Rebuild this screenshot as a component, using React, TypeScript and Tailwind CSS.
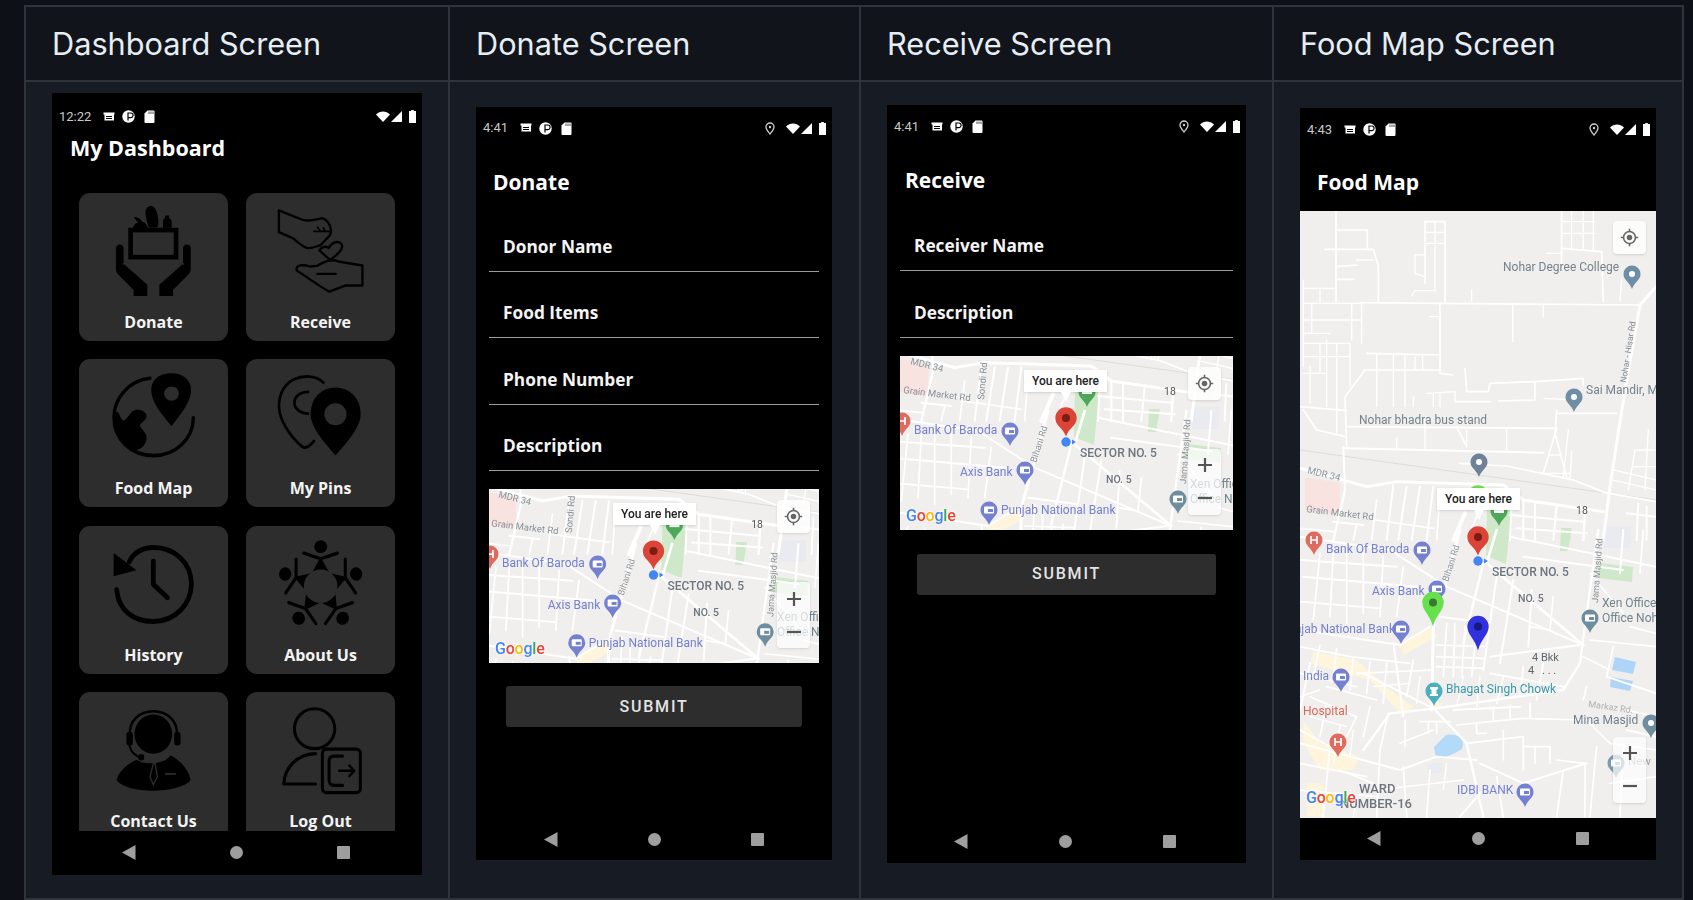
import type { ReactNode } from "react";

const openSans = "[font-family:'Open_Sans',sans-serif]";
const roboto = "[font-family:Roboto,sans-serif]";

/* map roads, written in crop coords and scaled down to world coords */
const northRoads: [number, string][] = [
  [5, "210,308 1050,315"],
  [9, "1098,260 1050,315 1005,570 960,860 940,1020"],
  [5, "138,33 138,305"],
  [5, "138,90 232,90 232,145"],
  [5, "105,148 250,148 265,198 265,305"],
  [5, "200,195 138,200"],
  [5, "200,180 250,180"],
  [5, "138,238 190,238"],
  [5, "405,65 465,65 465,305"],
  [5, "405,65 405,250"],
  [4, "405,97 465,97"],
  [4, "405,130 465,130"],
  [4, "435,65 435,275"],
  [4, "375,165 405,165"],
  [4, "375,165 375,220 405,230"],
  [4, "365,288 375,272 435,272"],
  [5, "815,33 815,190"],
  [4, "845,33 845,150"],
  [4, "880,33 880,150"],
  [4, "910,33 910,150"],
  [4, "815,65 915,65"],
  [4, "815,100 915,100"],
  [5, "815,145 935,155 940,305"],
  [4, "770,160 815,160"],
  [4, "990,305 995,240"],
  [4, "545,270 545,305"],
  [4, "668,315 668,425"],
  [4, "760,315 760,350"],
  [5, "450,310 450,520 488,525"],
  [4, "420,350 450,350"],
  [5, "230,460 450,465"],
  [5, "225,510 450,510"],
  [4, "260,460 260,620"],
  [4, "310,465 310,620"],
  [4, "345,465 345,620"],
  [4, "375,470 375,510"],
  [4, "398,470 398,510"],
  [5, "225,510 165,590 170,740"],
  [4, "40,240 40,500"],
  [4, "40,310 215,310"],
  [4, "65,310 65,400"],
  [4, "90,265 90,310"],
  [4, "40,265 135,265"],
  [4, "40,360 215,360"],
  [4, "40,430 180,430"],
  [4, "40,470 180,470"],
  [4, "110,420 110,620"],
  [4, "140,430 140,700"],
  [4, "185,310 185,420"],
  [4, "215,310 215,430"],
  [4, "180,430 180,560"],
  [4, "60,500 60,610"],
  [4, "90,430 90,520"],
  [4, "40,400 120,400"],
  [4, "40,520 110,520"],
  [5, "30,620 170,632"],
  [5, "40,630 80,690 165,710"],
  [5, "170,680 800,685"],
  [6, "165,745 760,758"],
  [4, "405,650 405,750"],
  [4, "320,715 320,745"],
  [4, "650,688 650,755"],
  [5, "525,505 530,575 595,575 600,550 735,545 735,600 625,603"],
  [5, "735,545 880,535 880,555"],
  [5, "495,605 600,605"],
  [4, "410,580 495,575 495,605"],
  [4, "370,590 370,620"],
  [4, "430,580 430,620"],
  [4, "450,580 450,620"],
  [5, "500,680 530,740"],
  [4, "530,690 530,735"],
  [5, "800,685 760,820"],
  [5, "800,640 980,640"],
  [4, "762,595 850,600"],
  [5, "800,630 795,700 830,830"],
  [4, "835,690 820,835"],
  [4, "845,755 840,840"],
  [4, "755,820 840,820"],
  [4, "775,765 815,765"],
  [5, "510,790 650,798 850,840 945,878 1098,905"],
  [9, "30,805 230,860 320,845 640,855 700,900 940,935"],
  [4, "1040,750 1095,750"],
  [4, "1030,800 1098,800"],
  [4, "970,810 1098,840"],
  [4, "965,840 1098,870"],
  [4, "1035,750 1015,870"],
  [4, "1075,690 1065,870"],
  [6, "310,855 290,1020"],
  [6, "350,860 325,1020"],
  [6, "390,860 365,1020"],
  [6, "430,860 410,1020"],
  [7, "165,870 130,1020"],
  [6, "160,740 165,870"],
  [5, "255,960 430,985"],
  [12, "525,940 490,1020"],
  [6, "665,905 660,1020"],
  [6, "700,900 700,1020"],
  [6, "735,905 735,1020"],
  [6, "800,920 790,1020"],
  [7, "885,940 880,1020"],
  [6, "660,945 880,965"],
  [6, "680,985 890,1000"],
  [6, "130,965 220,975"],
  [6, "1010,940 1098,950"],
  [6, "1045,910 1040,1020"],
  [6, "1070,920 1070,1020"],
  [5, "200,975 190,1020"],
  [5, "260,900 245,1020"],
  [5, "30,985 130,995"],
  [5, "450,880 440,1020"],
  [5, "560,950 530,1020"],
];

const southRoads: [number, string][] = [
  [9, "510,0 430,290 425,540"],
  [7, "580,100 520,340"],
  [6, "30,20 300,60 470,170 880,345"],
  [8, "620,0 590,100 880,345"],
  [7, "925,0 890,250 870,400 820,480 440,535 300,550 220,660"],
  [6, "30,90 320,110"],
  [6, "40,140 380,170"],
  [5, "90,70 70,270"],
  [5, "130,70 120,260"],
  [5, "170,60 170,280"],
  [5, "220,70 220,250"],
  [5, "280,80 270,260"],
  [5, "340,110 320,260"],
  [5, "30,215 270,235"],
  [6, "620,140 580,420"],
  [6, "670,150 630,400"],
  [6, "725,180 715,350"],
  [5, "790,200 780,300 720,290"],
  [6, "660,20 1098,110"],
  [6, "700,80 1000,120"],
  [6, "1000,0 990,130"],
  [5, "1060,0 1050,130"],
  [6, "600,380 870,345"],
  [6, "450,260 600,280"],
  [5, "470,280 460,440"],
  [5, "495,280 490,440"],
  [5, "525,290 515,440"],
  [5, "555,340 545,440"],
  [5, "440,345 590,350"],
  [5, "440,380 580,385"],
  [5, "440,410 580,415"],
  [6, "30,300 330,345"],
  [6, "330,345 420,290"],
  [6, "310,340 340,560"],
  [5, "180,380 360,400"],
  [5, "200,430 430,420"],
  [5, "370,390 350,500"],
  [6, "60,400 30,540"],
  [5, "110,470 260,510"],
  [6, "220,430 430,535"],
  [7, "430,535 530,640 580,860"],
  [6, "30,640 330,720 440,680 560,690"],
  [5, "295,550 270,660 260,860"],
  [5, "345,570 345,650"],
  [5, "390,575 480,575"],
  [5, "415,575 415,610"],
  [5, "440,575 440,610"],
  [6, "490,540 690,530"],
  [5, "500,585 700,565 880,570"],
  [5, "560,580 560,610 590,610"],
  [5, "610,530 610,570"],
  [5, "660,525 660,570"],
  [5, "720,520 720,565"],
  [6, "570,700 700,760 890,700"],
  [5, "700,650 780,650 780,700"],
  [5, "700,620 700,720"],
  [5, "735,650 735,700"],
  [5, "800,690 885,700 885,860"],
  [5, "820,720 800,860"],
  [6, "1010,600 1098,620"],
  [5, "1020,290 1098,310"],
  [5, "900,330 1098,350"],
  [6, "950,440 1098,490"],
  [5, "890,470 880,510"],
  [6, "510,860 570,790"],
  [5, "620,740 640,860"],
  [5, "120,650 100,860"],
  [5, "30,600 120,650"],
  [5, "150,720 250,760"],
  [5, "30,350 180,380"],
  [5, "90,345 70,440"],
  [5, "140,355 130,440"],
  [5, "190,380 180,480"],
  [5, "240,395 230,490"],
  [5, "290,400 280,520"],
  [5, "30,430 200,470"],
  [5, "60,500 200,560"],
  [5, "200,560 160,640"],
  [5, "110,520 90,620"],
  [5, "240,530 220,620"],
  [5, "30,700 230,740"],
  [5, "330,640 430,600"],
  [5, "340,710 350,860"],
  [5, "420,720 410,860"],
  [5, "260,780 520,750"],
  [5, "600,430 820,470"],
  [5, "640,440 620,520"],
  [5, "760,400 740,510"],
  [5, "700,410 690,500"],
  [5, "20,780 260,800"],
  [5, "640,600 640,690"],
  [5, "530,640 700,620"],
  [5, "890,570 960,640 1098,660"],
  [5, "920,650 900,860"],
  [5, "960,760 1098,740"],
  [5, "1000,650 990,860"],
  [5, "880,380 960,420"],
  [5, "970,350 950,440"],
  [5, "1098,560 1010,540"],
  [5, "900,130 1000,250"],
  [4, "60,560 170,590"],
  [4, "150,590 130,700"],
  [4, "190,600 180,680"],
  [4, "360,460 250,470"],
  [4, "390,440 380,520"],
  [4, "520,440 500,530"],
  [4, "570,440 560,530"],
  [4, "30,500 90,480"],
  [4, "200,800 190,860"],
  [4, "470,700 460,780"],
];

function Teardrop({ x, y, r, tip, color, dot, inner }: { x: number; y: number; r: number; tip: number; color: string; dot?: string; inner?: number }) {
  // x,y = head centre, tip = height from centre to the point
  const d = `M${x - r} ${y}a${r} ${r} 0 1 1 ${2 * r} 0c0 ${r * 0.75} ${-r * 0.7} ${tip * 0.5} ${-r} ${tip}c${-r * 0.3} ${-tip * 0.5} ${-r} ${-tip + r * 0.75} ${-r} ${-tip}z`;
  return (
    <g>
      <path d={d} fill={color} />
      {dot && <circle cx={x} cy={y} r={inner ?? r * 0.38} fill={dot} />}
    </g>
  );
}

function Poi({ x, y, color, icon = "bank" }: { x: number; y: number; color: string; icon?: "bank" | "dot" }) {
  return (
    <g>
      <Teardrop x={x} y={y} r={8.5} tip={15} color={color} />
      {icon === "bank" ? (
        <g>
          <rect x={x - 5} y={y - 3.5} width={10} height={7} rx={1} fill="#fff" />
          <rect x={x - 1} y={y - 1} width={5} height={3} fill={color} />
        </g>
      ) : (
        <circle cx={x} cy={y} r={3} fill="#fff" />
      )}
    </g>
  );
}

function HospitalPin({ x, y }: { x: number; y: number }) {
  return (
    <g>
      <Teardrop x={x} y={y} r={8.5} tip={15} color="#df6b5f" />
      <path d={`M${x - 3} ${y - 4}v8M${x + 3} ${y - 4}v8M${x - 3} ${y}h6`} stroke="#fff" strokeWidth={1.7} />
    </g>
  );
}

function MapText({ x, y, size = 12, color = "#73838f", weight = 400, rotate, anchor, children }: { x: number; y: number; size?: number; color?: string; weight?: number; rotate?: number; anchor?: "end" | "middle"; children: ReactNode }) {
  return (
    <text x={x} y={y} fontSize={size} fill={color} fontWeight={weight} textAnchor={anchor} transform={rotate ? `rotate(${rotate} ${x} ${y})` : undefined} className={roboto}>
      {children}
    </text>
  );
}

function MapWorld({ small }: { small?: boolean }) {
  const bank = "#7480d0";
  return (
    <>
      <rect x={-10} y={-20} width={400} height={660} fill="#f0efed" />
      <path d="M5 266L40 272V304L5 299Z" fill="#f8e3e0" />
      <path d="M187 295H212L206 353L186 345Z" fill="#cfe8c9" />
      <path d="M261 317H272L268 340H260Z" fill="#cfe8c9" />
      <path d="M300 352L333 356L332 371L298 367Z" fill="#cfe8c9" />
      <path d="M304 315H331V337H304Z" fill="#e9ebf0" />
      <path d="M315 446L336 451L333 463L312 459ZM311 466L333 470L330 480L310 476Z" fill="#aed5f8" />
      <path d="M134 536L146 524C158 522 166 528 162 538C152 544 144 548 136 546Z" fill="#b3daf9" />
      <path d="M128 552H142V562H128Z" fill="#e9ebf0" />

      <g transform="translate(-10,319) scale(0.3333)" fill="none" strokeLinecap="round" strokeLinejoin="round">
        <path d="M70 365L200 390L300 480L370 530L340 560L240 450L60 400Z" fill="#fef5dc" />
        <path d="M330 345L420 290L440 320L340 375Z" fill="#fef5dc" />
        <path d="M40 570L90 640L210 680L190 720H90L40 640Z" fill="#fef5dc" />
        <path d="M50 760H100V860H50Z" fill="#fef5dc" />
        <path d="M410 510L460 520L440 540Z" fill="#fef5dc" />
        {southRoads.map(([w, pts], i) => (
          <polyline key={i} points={pts} stroke="#fff" strokeWidth={w} />
        ))}
      </g>

      <g transform="translate(-10,-11) scale(0.3333)" fill="none" strokeLinecap="round" strokeLinejoin="round">
        <path d="M30 750L1098 900" stroke="#dcdcdc" strokeWidth={3} />
        {northRoads.map(([w, pts], i) => (
          <polyline key={i} points={pts} stroke="#fff" strokeWidth={w} />
        ))}
      </g>

      <MapText x={203} y={60} size={12}>Nohar Degree College</MapText>
      <Poi x={332} y={63} color="#6e8ea5" icon="dot" />
      <MapText x={286} y={183} size={12}>Sai Mandir, M</MapText>
      <Poi x={274} y={186} color="#6e8ea5" icon="dot" />
      <MapText x={59} y={213} size={12}>Nohar bhadra bus stand</MapText>
      <MapText x={326} y={172} size={8.5} rotate={-81} color="#7d8a94">Nohar - Hisar Rd</MapText>
      {small ? (
        <MapText x={22} y={272} size={9.5} rotate={14} color="#8a96a0">MDR 34</MapText>
      ) : (
        <MapText x={7} y={262} size={9.5} rotate={14} color="#8a96a0">MDR 34</MapText>
      )}
      <MapText x={small ? 15 : 6} y={301} size={9.5} rotate={7} color="#8a9299">Grain Market Rd</MapText>
      <MapText x={276} y={303} size={10.5} color="#555">18</MapText>
      {small && <MapText x={96} y={308} size={9.5} rotate={-85} color="#8a9299">Sondi Rd</MapText>}

      <Teardrop x={199} y={300} r={8.5} tip={15} color="#4fa75a" />
      <path d={`M194 298h10v4h-10z`} fill="#fff" />

      <HospitalPin x={14} y={329} />
      <MapText x={26} y={342} size={12} color={bank}>Bank Of Baroda</MapText>
      <Poi x={122} y={339} color={bank} />
      <MapText x={72} y={384} size={12} color={bank}>Axis Bank</MapText>
      <Poi x={137} y={378} color={bank} />
      <MapText x={148} y={371} size={9} rotate={-72} color="#8a9299">Bihani Rd</MapText>
      <MapText x={192} y={365} size={12} weight={500} color="#6d7580">SECTOR NO. 5</MapText>
      <MapText x={218} y={391} size={10.5} weight={500} color="#6d7580">NO. 5</MapText>
      <MapText x={298} y={392} size={9} rotate={-86} color="#8a9299">Jama Masjid Rd</MapText>
      <MapText x={302} y={396} size={12} color="#71848f">Xen Office</MapText>
      <MapText x={302} y={411} size={12} color="#71848f">Office Noh</MapText>
      <Poi x={290} y={407} color="#6e8ea0" />
      {small ? (
        <MapText x={113} y={422} size={12} color={bank}>Punjab National Bank</MapText>
      ) : (
        <MapText x={95} y={422} size={12} color={bank} anchor="end">Punjab National Bank</MapText>
      )}
      <Poi x={101} y={418} color={bank} />

      <MapText x={3} y={469} size={12} color={bank}>India</MapText>
      <Poi x={41} y={466} color={bank} />
      <MapText x={3} y={504} size={12} color="#d9675c">Hospital</MapText>
      <HospitalPin x={38} y={531} />
      <MapText x={146} y={482} size={12} color="#3a9aa8">Bhagat Singh Chowk</MapText>
      <Teardrop x={134} y={480} r={8.5} tip={15} color="#4aafc0" />
      <path d="M130 476h8v2l-1.5 1v4h1.5v2h-8v-2h1.5v-4l-1.5-1z" fill="#fff" />
      <MapText x={232} y={450} size={11} color="#5f6870">4 Bkk</MapText>
      <MapText x={228} y={463} size={11} color="#5f6870">4</MapText>
      <MapText x={242} y={463} size={11} color="#5f6870">.  .  .</MapText>
      <MapText x={288} y={496} size={9} rotate={8} color="#b0b0b0">Markaz Rd.</MapText>
      <MapText x={273} y={513} size={12} color="#71808f">Mina Masjid</MapText>
      <Poi x={351} y={512} color="#6e8ea0" icon="dot" />
      <Poi x={316} y={552} color="#7d9aab" />
      <MapText x={328} y={554} size={11.5} color="#9aa2aa">New</MapText>
      <MapText x={59} y={582} size={13} weight={500} color="#6d7580">WARD</MapText>
      <MapText x={112} y={597} size={13} weight={500} color="#6d7580" anchor="end">NUMBER-16</MapText>
      <MapText x={157} y={583} size={12} color={bank}>IDBI BANK</MapText>
      <Poi x={225} y={581} color={bank} />
    </>
  );
}

function GoogleMark({ className }: { className: string }) {
  return (
    <span className={`absolute text-[16px] font-medium leading-none tracking-[-0.2px] [text-shadow:0_0_2px_#fff,0_0_2px_#fff] ${roboto} ${className}`}>
      <span className="text-[#4285f4]">G</span>
      <span className="text-[#ea4335]">o</span>
      <span className="text-[#fbbc05]">o</span>
      <span className="text-[#4285f4]">g</span>
      <span className="text-[#34a853]">l</span>
      <span className="text-[#ea4335]">e</span>
    </span>
  );
}

function HereBubble({ className }: { className: string }) {
  return (
    <div className={`absolute flex h-[22px] w-[83px] items-center justify-center bg-white text-[12px] font-medium text-[#222] shadow-sm ${roboto} ${className}`}>
      You are here
      <div className="absolute top-full left-1/2 -ml-[5px] h-0 w-0 border-x-[5px] border-t-[10px] border-x-transparent border-t-white" />
    </div>
  );
}

function LocateButton({ className }: { className: string }) {
  return (
    <div className={`absolute flex h-[33px] w-[33px] items-center justify-center rounded-sm bg-white/80 shadow-sm ${className}`}>
      <svg width="19" height="19" viewBox="0 0 24 24" fill="none" stroke="#666" strokeWidth="2">
        <circle cx="12" cy="12" r="7.5" />
        <circle cx="12" cy="12" r="3.5" fill="#666" stroke="none" />
        <path d="M12 1v3M12 20v3M1 12h3M20 12h3" />
      </svg>
    </div>
  );
}

function ZoomButtons({ className }: { className: string }) {
  return (
    <div className={`absolute flex h-[66px] w-[33px] flex-col items-center justify-around rounded-sm bg-white/70 shadow-sm ${className}`}>
      <svg width="16" height="16" viewBox="0 0 16 16" stroke="#555" strokeWidth="2.2"><path d="M8 1v14M1 8h14" /></svg>
      <svg width="16" height="16" viewBox="0 0 16 16" stroke="#555" strokeWidth="2.2"><path d="M1 8h14" /></svg>
    </div>
  );
}

function SmallMap({ className }: { className: string }) {
  return (
    <div className={`relative h-[174px] w-full overflow-hidden bg-[#f0efed] ${className}`}>
      <svg viewBox="13 264 331 174" className="block h-full w-full blur-[0.3px]">
        <MapWorld small />
        <Teardrop x={178} y={326} r={10.7} tip={18.5} color="#db4437" dot="#7a1d15" inner={4} />
        <circle cx={178} cy={350} r={4.7} fill="#4285f4" />
        <path d="M184 347.5l4 2.5l-4 2.5z" fill="#4285f4" />
      </svg>
      <HereBubble className="top-[14px] left-[124px]" />
      <LocateButton className="top-[11px] left-[288px]" />
      <ZoomButtons className="top-[93px] left-[288px]" />
      <GoogleMark className="bottom-[6px] left-[6px]" />
    </div>
  );
}

function BigMap() {
  return (
    <div className="relative h-[607px] w-full overflow-hidden bg-[#f0efed]">
      <svg viewBox="0 0 356 607" className="block h-full w-full blur-[0.3px]">
        <MapWorld />
        <Poi x={179} y={251} color="#6e8197" icon="dot" />
        <Teardrop x={178} y={285} r={10.7} tip={18.5} color="#66e04c" dot="#3a7a30" inner={4} />
        <Teardrop x={178} y={326} r={10.7} tip={18.5} color="#db4437" dot="#7a1d15" inner={4} />
        <circle cx={178} cy={350} r={4.7} fill="#4285f4" />
        <path d="M184 347.5l4 2.5l-4 2.5z" fill="#4285f4" />
        <Teardrop x={133} y={391.5} r={10.7} tip={24} color="#66e04c" dot="#3a7a30" inner={4} />
        <Teardrop x={178} y={415.5} r={10.7} tip={24} color="#3131e0" dot="#161a7a" inner={4} />
      </svg>
      <HereBubble className="top-[277px] left-[137px]" />
      <LocateButton className="top-[10px] left-[313px]" />
      <ZoomButtons className="top-[526px] left-[313px]" />
      <GoogleMark className="bottom-[12px] left-[6px]" />
    </div>
  );
}

function NotifIcons() {
  return (
    <div className="ml-[12px] flex items-center gap-[8px]">
      <svg width="12" height="12" viewBox="0 0 12 12" fill="#fff">
        <path d="M0.5 1.5H11.5V3.5H11V9.5H1.5V3.5H0.5ZM3 5V6H9V5ZM3 7V8H9V7Z" fillRule="evenodd" />
      </svg>
      <svg width="13" height="13" viewBox="0 0 13 13" className="-ml-[1px]">
        <circle cx="6.5" cy="6.5" r="6.2" fill="#fff" />
        <path d="M6 2.5V10.5M6 3H8.8a2.2 2.2 0 0 1 0 4.6H6" stroke="#000" strokeWidth="1.2" fill="none" />
      </svg>
      <svg width="11" height="13" viewBox="0 0 11 13" fill="#fff" className="ml-[1px]">
        <path d="M3.5 0.5H9.5a1 1 0 0 1 1 1V12a1 1 0 0 1-1 1H1.5a1 1 0 0 1-1-1V3.5Z" />
        <path d="M5 1.5v2.5M7 1.5v2.5M9 1.5v2.5" stroke="#000" strokeWidth="0.7" />
      </svg>
    </div>
  );
}

function StatusBar({ time, pin, className }: { time: string; pin?: boolean; className: string }) {
  return (
    <div className={`flex shrink-0 items-center pr-[6px] pl-[7px] ${className}`}>
      <span className={`text-[13px] text-[#c9c9c9] ${roboto}`}>{time}</span>
      <NotifIcons />
      <div className="ml-auto flex items-center">
        {pin && (
          <svg width="10" height="13" viewBox="0 0 10 13" fill="none" stroke="#ccc" strokeWidth="1.3" className="mr-[11px]">
            <path d="M5 12C3 9.5 1 7.5 1 5a4 4 0 0 1 8 0C9 7.5 7 9.5 5 12Z" />
            <circle cx="5" cy="5" r="1.2" fill="#ccc" stroke="none" />
          </svg>
        )}
        <svg width="14" height="11" viewBox="0 0 14 11" fill="#fff"><path d="M0 3.4C3.8-.6 10.2-.6 14 3.4L7 11Z" /></svg>
        <svg width="12" height="11" viewBox="0 0 12 11" fill="#fff" className="mr-[6px] ml-[1px]"><path d="M11 0V11H0Z" /></svg>
        <svg width="7" height="13" viewBox="0 0 7 13" fill="#fff"><path d="M2.2 0H4.8V1H7V13H0V1H2.2Z" /></svg>
      </div>
    </div>
  );
}

function NavBar({ xs, className }: { xs: string; className: string }) {
  return (
    <div className={`mt-auto flex shrink-0 items-center ${xs} ${className}`}>
      <svg width="14" height="15" viewBox="0 0 14 15" fill="#9e9e9e"><path d="M13.5 0V15L0 7.5Z" /></svg>
      <div className="h-[13px] w-[13px] rounded-full bg-[#9e9e9e]" />
      <div className="h-[13px] w-[13px] rounded-[1px] bg-[#9e9e9e]" />
    </div>
  );
}

function Field({ label }: { label: string }) {
  return (
    <div className={`flex h-[66.6px] shrink-0 items-end border-b-[1.5px] border-[#9a9a9a] pb-[12px] pl-[14px] text-[17.3px] leading-[24px] font-bold text-[#f4f4f4] ${openSans}`}>
      {label}
    </div>
  );
}

function SubmitButton() {
  return (
    <div className={`mx-[17px] flex h-[41px] items-center justify-center rounded-[3px] bg-[#2d2d2d] text-[16px] font-medium tracking-[1.8px] text-[#e4e4e4] ${roboto}`}>
      SUBMIT
    </div>
  );
}

/* dashboard tile artwork */
const rowBox = "0 0 443 415";

function DonateIcon() {
  const hand = "M109 165c0-14 23-14 23 0v40c0 4 2 8 5 11l66 59v33h-41v-18l-46-46c-5-5-7-10-7-16z";
  const gap = "M130 214c5-6 10-4 16 2l34 32";
  return (
    <svg viewBox="0 0 443 443" className="h-full w-full" fill="#000">
      <path d="M163 72Q180 70 190 90Q172 92 163 72Z" />
      <path d="M198 66c-3-14 3-25 14-27 13-2 20 16 23 34 2 12 2 24-2 30h-26c-4-12-7-24-9-37z" />
      <path d="M250 104V84c0-6 4-8 6-10v-7h12v7c2 2 8 6 8 12v18z" />
      <path d="M160 106c2-14 14-20 24-20s18 8 21 20z" />
      <rect x="153" y="111" width="136" height="81" fill="none" stroke="#000" strokeWidth="14" />
      <path d={hand} />
      <path d={gap} fill="none" stroke="#2d2d2d" strokeWidth="5" />
      <g transform="translate(442,0) scale(-1,1)">
        <path d={hand} />
        <path d={gap} fill="none" stroke="#2d2d2d" strokeWidth="5" />
      </g>
    </svg>
  );
}

function ReceiveIcon() {
  return (
    <svg viewBox="0 0 443 443" className="h-full w-full" fill="none" stroke="#000" strokeWidth="7" strokeLinejoin="round" strokeLinecap="round">
      <path d="M97 52V117L140 136C152 146 165 158 180 164C195 168 210 160 222 156L250 126C258 105 245 82 227 75C200 82 180 85 167 80Z" />
      <path d="M202 115H247M212 102L222 115M230 104L236 115" strokeWidth="5" />
      <path d="M250 200L218 172C226 160 238 158 246 165C252 150 272 140 284 152C292 165 280 180 250 200Z" />
      <path d="M150 226C150 215 170 214 190 220L212 218C240 200 260 198 275 205L347 217V277H295L248 295C225 285 180 250 150 232Z" />
      <path d="M212 242H267" />
    </svg>
  );
}

function FoodMapIcon() {
  return (
    <svg viewBox={rowBox} preserveAspectRatio="none" className="h-full w-full">
      <path d="M211 54C150 60 104 108 104 163c0 62 50 108 118 108 64 0 118-46 118-106" fill="none" stroke="#000" strokeWidth="10" strokeLinecap="round" />
      <path d="M106 150c14-8 12 8 22 20 8 10 20-14 30-22 12-10 36-6 42 8 4 12-12 20-18 28-4 8 14 18 18 30 4 16-6 34-24 40-8 2-16 4-22 0-36-20-48-56-48-104z" fill="#000" />
      <path d="M275 188c-20-24-60-64-60-100 0-34 28-48 60-48s58 16 58 48c0 34-38 76-58 100z" fill="#000" />
      <ellipse cx="275" cy="97" rx="22" ry="20" fill="#2d2d2d" />
    </svg>
  );
}

function MyPinsIcon() {
  return (
    <svg viewBox={rowBox} preserveAspectRatio="none" className="h-full w-full">
      <path d="M230 66C210 46 172 44 140 58C108 74 92 112 100 150C110 190 145 230 168 246C178 252 192 242 202 230" fill="none" stroke="#000" strokeWidth="8" strokeLinecap="round" />
      <path d="M185 92C165 92 144 102 144 123C144 142 165 153 185 153" fill="none" stroke="#000" strokeWidth="8" strokeLinecap="round" />
      <path d="M266 273C240 245 190 195 190 155C190 105 226 78 266 78C306 78 343 105 343 155C343 195 292 245 266 273Z" fill="#000" stroke="#2d2d2d" strokeWidth="4" />
      <ellipse cx="266" cy="155" rx="33" ry="31" fill="#2d2d2d" />
    </svg>
  );
}

function HistoryIcon() {
  return (
    <svg viewBox={rowBox} preserveAspectRatio="none" className="h-full w-full" fill="none" stroke="#000" strokeWidth="14" strokeLinecap="round" strokeLinejoin="round">
      <path d="M112 179C118 240 165 268 221 268C285 268 334 220 334 162C334 104 285 60 221 60C190 60 160 75 150 100" />
      <path d="M103 76V141L171 124Z" fill="#000" stroke="none" />
      <path d="M221 99V164L263 201" />
    </svg>
  );
}

function AboutIcon() {
  return (
    <svg viewBox={rowBox} preserveAspectRatio="none" className="h-full w-full">
      {[0, 72, 144, 216, 288].map((a) => (
        <g key={a} transform={`rotate(${a} 222 169)`}>
          <ellipse cx="222" cy="58" rx="19" ry="18" fill="#000" />
          <path d="M172 76L222 92L272 76" fill="none" stroke="#000" strokeWidth="9" strokeLinecap="round" strokeLinejoin="round" />
          <path d="M222 86L198 128H246Z" fill="#000" />
        </g>
      ))}
      <ellipse cx="222" cy="169" rx="50" ry="47" fill="#2d2d2d" />
    </svg>
  );
}

function ContactIcon() {
  return (
    <svg viewBox={rowBox} preserveAspectRatio="none" className="h-full w-full">
      <ellipse cx="221" cy="118" rx="56" ry="55" fill="#000" />
      <path d="M151 122C148 80 180 54 221 54C262 54 294 80 291 122" fill="none" stroke="#000" strokeWidth="7" />
      <rect x="141" y="112" width="19" height="38" rx="7" fill="#000" />
      <rect x="283" y="112" width="19" height="38" rx="7" fill="#000" />
      <path d="M150 148C152 165 166 180 185 183" fill="none" stroke="#000" strokeWidth="6" />
      <circle cx="185" cy="183" r="9" fill="#000" />
      <path d="M112 248C116 222 150 198 172 190C190 205 252 205 272 178C300 190 328 220 332 248C300 282 150 290 112 248Z" fill="#000" />
      <path d="M221 200L211 238L221 260L233 238L226 200Z" fill="#000" stroke="#2d2d2d" strokeWidth="4" />
      <path d="M256 230H288" stroke="#2d2d2d" strokeWidth="5" />
    </svg>
  );
}

function LogOutIcon() {
  return (
    <svg viewBox={rowBox} preserveAspectRatio="none" className="h-full w-full" fill="none" stroke="#000" strokeWidth="9" strokeLinecap="round" strokeLinejoin="round">
      <ellipse cx="204" cy="103" rx="60" ry="56" />
      <path d="M207 173C150 175 115 212 112 258H207" />
      <rect x="227" y="160" width="113" height="122" rx="12" />
      <path d="M287 180H262C252 180 247 186 247 196V246C247 256 252 262 262 262H287" />
      <path d="M277 221H322M307 206L322 221L307 236" strokeWidth="7" />
    </svg>
  );
}

const tiles: { label: string; icon: ReactNode }[] = [
  { label: "Donate", icon: <DonateIcon /> },
  { label: "Receive", icon: <ReceiveIcon /> },
  { label: "Food Map", icon: <FoodMapIcon /> },
  { label: "My Pins", icon: <MyPinsIcon /> },
  { label: "History", icon: <HistoryIcon /> },
  { label: "About Us", icon: <AboutIcon /> },
  { label: "Contact Us", icon: <ContactIcon /> },
  { label: "Log Out", icon: <LogOutIcon /> },
];

function DashboardPhone() {
  return (
    <div className="flex h-[782px] w-[370px] flex-col bg-black">
      <StatusBar time="12:22" className="h-[44px] pt-[4px]" />
      <div className={`h-[56px] shrink-0 pl-[18px] text-[21.5px] leading-[22px] font-bold text-white ${openSans}`}>My Dashboard</div>
      <div className="grid h-[638px] shrink-0 grid-cols-[149px_149px] content-start gap-x-[18px] gap-y-[18.5px] overflow-hidden pl-[27px]">
        {tiles.map((t) => (
          <div key={t.label} className="relative h-[148px] rounded-[11px] bg-[#2d2d2d]">
            <div className="h-full w-full">{t.icon}</div>
            <div className={`absolute inset-x-0 top-[117px] text-center text-[16px] leading-[24px] font-bold text-[#f4f4f4] ${openSans}`}>{t.label}</div>
          </div>
        ))}
      </div>
      <NavBar xs="pl-[70px] gap-x-[94px]" className="h-[44px]" />
    </div>
  );
}

function DonatePhone() {
  return (
    <div className="flex h-[753px] w-[356px] flex-col bg-black">
      <StatusBar time="4:41" pin className="h-[42px]" />
      <div className={`h-[56px] shrink-0 pt-[19px] pl-[17px] text-[21px] leading-[28px] font-bold text-white ${openSans}`}>Donate</div>
      <div className="flex flex-col px-[13px]">
        <Field label="Donor Name" />
        <Field label="Food Items" />
        <Field label="Phone Number" />
        <Field label="Description" />
        <SmallMap className="mt-[18px]" />
        <div className="mt-[23px]"><SubmitButton /></div>
      </div>
      <NavBar xs="pl-[68px] gap-x-[90px]" className="h-[42px]" />
    </div>
  );
}

function ReceivePhone() {
  return (
    <div className="flex h-[758px] w-[359px] flex-col bg-black">
      <StatusBar time="4:41" pin className="h-[44px]" />
      <div className={`h-[56px] shrink-0 pt-[17px] pl-[18px] text-[21px] leading-[28px] font-bold text-white ${openSans}`}>Receive</div>
      <div className="flex flex-col px-[13px]">
        <Field label="Receiver Name" />
        <Field label="Description" />
        <SmallMap className="mt-[18px]" />
        <div className="mt-[24px]"><SubmitButton /></div>
      </div>
      <NavBar xs="pl-[67px] gap-x-[91px]" className="h-[42px]" />
    </div>
  );
}

function FoodMapPhone() {
  return (
    <div className="flex h-[752px] w-[356px] flex-col bg-black">
      <StatusBar time="4:43" pin className="h-[42px] pt-[2px]" />
      <div className={`h-[61px] shrink-0 pt-[18px] pl-[17px] text-[21px] leading-[28px] font-bold text-white ${openSans}`}>Food Map</div>
      <BigMap />
      <NavBar xs="pl-[67px] gap-x-[91px]" className="h-[42px]" />
    </div>
  );
}

const columns: { title: string; phone: ReactNode }[] = [
  { title: "Dashboard Screen", phone: <DashboardPhone /> },
  { title: "Donate Screen", phone: <DonatePhone /> },
  { title: "Receive Screen", phone: <ReceivePhone /> },
  { title: "Food Map Screen", phone: <FoodMapPhone /> },
];

export default function App() {
  return (
    <div className="h-[900px] w-[1693px] overflow-hidden bg-[#0d1117] pt-[5px] pl-[24px]">
      <div className="grid h-[895px] w-[1660px] grid-cols-[424px_411px_413px_410px] grid-rows-[75px_818px] border-t-2 border-l-2 border-[#2f343c]">
        {columns.map((c) => (
          <div key={c.title} className="flex items-center border-r-2 border-b-2 border-[#2f343c] bg-[#11141a] pt-[2px] pl-[26px] text-[30.7px] leading-none text-[#e6edf3] [font-family:Inter,sans-serif]">
            {c.title}
          </div>
        ))}
        {columns.map((c) => (
          <div key={c.title} className="flex items-start border-r-2 border-b-2 border-[#2f343c] bg-[#161b24] pl-[26px]">
            <div className="flex h-[803px] items-center">{c.phone}</div>
          </div>
        ))}
      </div>
    </div>
  );
}
